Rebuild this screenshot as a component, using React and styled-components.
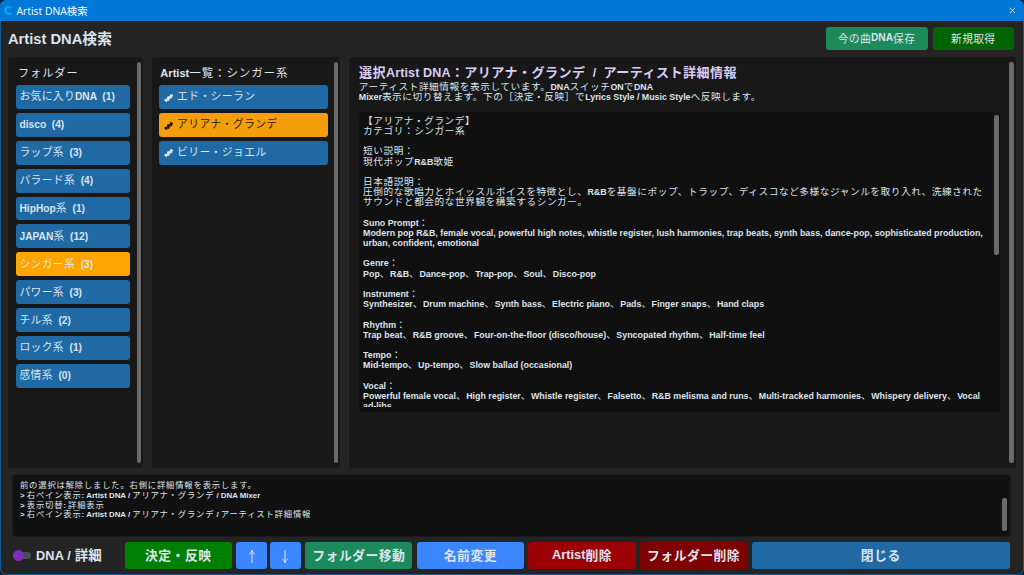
import React from 'react';
import styled, { createGlobalStyle } from 'styled-components';

const GlobalStyle = createGlobalStyle`
    * {
        box-sizing: border-box;
    }

    body {
        margin: 0;
        background: #10202c;
        overflow: hidden;
    }
`;

const Window = styled.div`
    display: flex;
    flex-direction: column;
    width: 1024px;
    height: 575px;
    overflow: hidden;
    border-radius: 6px;
    background: #242424;
    color: #dce4ee;
    font-family: 'Liberation Sans', 'Noto Sans CJK JP', sans-serif;
    font-weight: 700;
    text-spacing-trim: space-all;
    box-shadow: inset 0 0 0 1px #125a8e;
`;

const TitleBar = styled.header`
    display: flex;
    align-items: center;
    flex: none;
    height: 21px;
    padding: 0 8px 0 4px;
    background: #0078d7;
    color: #fff;
    font-family: 'Open Sans', 'Noto Sans CJK JP', sans-serif;
    font-weight: 400;
    font-size: 10.4px;

    svg {
        flex: none;
    }
`;

const WindowTitle = styled.div`
    flex: 1;
    padding: 0 0 0 3.4px;
    line-height: 20px;
`;

const Run = styled.span`
    font-weight: ${p => (p.$bold ? 700 : 400)};
    font-size: ${p => p.$scale}em;
    letter-spacing: ${p => p.$track}px;
`;

const Line = styled.div`
    height: ${p => p.$height}px;
    line-height: ${p => p.$height}px;
    white-space: pre;
`;

const Header = styled.div`
    display: flex;
    align-items: center;
    flex: none;
    gap: 5.5px;
    height: 36px;
    padding: 0 10.5px 1px 8px;
`;

const Heading = styled.h1`
    flex: 1;
    margin: 0;
    font-size: 14.7px;
    line-height: 20px;
`;

const Button = styled.button`
    display: flex;
    align-items: center;
    justify-content: center;
    flex: ${p => (p.$grow ? 1 : 'none')};
    width: ${p => p.$width}px;
    height: ${p => p.$height || 27}px;
    padding: 0 0 2px;
    border: 0;
    border-radius: 3px;
    background: ${p => p.$color};
    color: #dce4ee;
    font: inherit;
    font-size: ${p => p.$size || 12.8}px;
    white-space: pre;
`;

const Panels = styled.main`
    display: grid;
    grid-template-columns: 135px 188.5px 667px;
    gap: 8.5px;
    flex: none;
    height: 410.5px;
    padding-left: 8px;
`;

const Panel = styled.section`
    display: flex;
    justify-content: space-between;
    min-width: 0;
    padding: 4.5px 2px 4.5px ${p => p.$left}px;
    border-radius: 4px;
    background: #181818;
`;

const PanelBody = styled.div`
    width: ${p => p.$width}px;
`;

const PanelTitle = styled.h2`
    height: 23.5px;
    margin: 0;
    padding-left: ${p => p.$left}px;
    font-size: 11.1px;
    line-height: 22px;
    white-space: pre;
`;

const Scrollbar = styled.div`
    flex: none;
    width: 4.5px;
    height: ${p => (p.$height ? `${p.$height}px` : '100%')};
    border-radius: 2px;
    background: #6a6a6a;
`;

const List = styled.ul`
    display: flex;
    flex-direction: column;
    gap: 4px;
    margin: 0;
    padding: 0;
    list-style: none;
`;

const Item = styled.li`
    display: flex;
    align-items: center;
    gap: 3.5px;
    height: 23.9px;
    padding: 0 4px;
    border-radius: 3px;
    background: ${p => p.$color || '#1f6aa5'};
    color: ${p => p.$text || '#dce4ee'};
    font-size: 10.2px;
    line-height: 23px;
    white-space: pre;

    svg {
        margin: 1px 0 0 1px;
    }
`;

const ItemText = styled.span`
    height: 23px;
`;

const DetailTitle = styled.h2`
    height: 20.7px;
    margin: 0;
    padding-left: 0.5px;
    color: #d9cdf5;
    font-size: 12.56px;
    line-height: 21px;
    white-space: pre;
`;

const Description = styled.div`
    height: 29.6px;
    padding-left: 0.3px;
    font-size: 8.86px;
`;

const DetailBox = styled.div`
    display: flex;
    justify-content: space-between;
    height: 300px;
    padding: 3.2px 1px 4px 4.6px;
    border-radius: 4px;
    background: #101010;
    font-size: 8.86px;
`;

const Clip = styled.div`
    height: 292px;
    padding-top: 0.8px;
    overflow: hidden;
`;

const Log = styled.section`
    display: flex;
    align-items: flex-end;
    justify-content: space-between;
    flex: none;
    width: 999px;
    height: 63px;
    margin: 6.5px 0 0 12.4px;
    padding: 0 3.5px 5.5px 6.6px;
    border: 1px solid #1b1b1b;
    border-radius: 4px;
    background: #111;
    font-size: 7.85px;
`;

const LogLines = styled.div`
    align-self: flex-start;
    padding-top: 6px;
`;

const Footer = styled.footer`
    display: flex;
    align-items: center;
    gap: 4.3px;
    flex: none;
    height: 27px;
    margin-top: 5px;
    padding: 0 14px 0 13px;
`;

const Toggle = styled.label`
    display: flex;
    align-items: center;
    gap: 5px;
    width: 107.3px;
    font-size: 12.7px;
    line-height: 27px;
    white-space: pre;
`;

const ToggleText = styled.span`
    height: 27px;
`;

const Track = styled.span`
    display: flex;
    align-items: center;
    width: 18px;
    height: 7px;
    border-radius: 4px;
    background: #4a4d50;
`;

const Knob = styled.span`
    flex: none;
    width: 10.5px;
    height: 10.5px;
    border-radius: 50%;
    background: #7b2cbf;
`;

const ArrowPair = styled.div`
    display: flex;
    gap: 2.7px;
`;

const CJK = /([\u3000-\u9fff\uff00-\uffef]+)/;

// Latin runs are bold; the Japanese ones are larger and spaced to a wider grid
const Mixed = ({ children, track = 0.3, scale = 1.06, bold = false, latin = 0 }) =>
    children.split(CJK).map((part, i) => (
        <Run
            key={i}
            $bold={i % 2 === 0 || bold}
            $scale={i % 2 ? scale : 1}
            $track={i % 2 ? track : latin}
        >
            {part}
        </Run>
    ));

const folders = [
    'お気に入りDNA  (1)',
    'disco  (4)',
    'ラップ系  (3)',
    'バラード系  (4)',
    'HipHop系  (1)',
    'JAPAN系  (12)',
    'シンガー系  (3)',
    'パワー系  (3)',
    'チル系  (2)',
    'ロック系  (1)',
    '感情系  (0)',
];

const artists = ['エド・シーラン', 'アリアナ・グランデ', 'ビリー・ジョエル'];

const description = [
    'アーティスト詳細情報を表示しています。DNAスイッチONでDNA',
    'Mixer表示に切り替えます。下の［決定・反映］でLyrics Style / Music Styleへ反映します。',
];

const details = `【アリアナ・グランデ】
カテゴリ：シンガー系

短い説明：
現代ポップR&B歌姫

日本語説明：
圧倒的な歌唱力とホイッスルボイスを特徴とし、R&Bを基盤にポップ、トラップ、ディスコなど多様なジャンルを取り入れ、洗練された
サウンドと都会的な世界観を構築するシンガー。

Suno Prompt：
Modern pop R&B, female vocal, powerful high notes, whistle register, lush harmonies, trap beats, synth bass, dance-pop, sophisticated production,
urban, confident, emotional

Genre：
Pop、R&B、Dance-pop、Trap-pop、Soul、Disco-pop

Instrument：
Synthesizer、Drum machine、Synth bass、Electric piano、Pads、Finger snaps、Hand claps

Rhythm：
Trap beat、R&B groove、Four-on-the-floor (disco/house)、Syncopated rhythm、Half-time feel

Tempo：
Mid-tempo、Up-tempo、Slow ballad (occasional)

Vocal：
Powerful female vocal、High register、Whistle register、Falsetto、R&B melisma and runs、Multi-tracked harmonies、Whispery delivery、Vocal
ad-libs`.split('\n');

const logs = [
    '前の選択は解除しました。右側に詳細情報を表示します。',
    '> 右ペイン表示: Artist DNA / アリアナ・グランデ / DNA Mixer',
    '> 表示切替: 詳細表示',
    '> 右ペイン表示: Artist DNA / アリアナ・グランデ / アーティスト詳細情報',
];

const AppIcon = () => (
    <svg width="9" height="9" viewBox="0 0 9 9" fill="none">
        <path d="M7.6 1.3H3L1.6 2.6v3.8L3 7.7h4.6" stroke="#12a0fb" strokeWidth="2" />
    </svg>
);

const CloseIcon = () => (
    <svg width="7" height="7" viewBox="0 0 7 7" fill="none">
        <path d="M.8.8l5.2 5.2M6 .8L.8 6" stroke="#d8ecff" strokeWidth=".9" />
    </svg>
);

const DnaIcon = () => (
    <svg width="9.5" height="9.5" viewBox="0 0 10 10" fill="currentColor">
        <path d="M.5 6.6l1.3-.9.6.5 1-.9-.4-1 1.4-1.2 1 .5.9-.8-.3-.8L7.3.7l.6.9 1.4.2.4 1-1.2 1.1.2.9-1.3 1.1-1-.2-.6.6.2 1-1.3 1.2-1-.4-.5.6-.1.9-1 .2-.5-1-1.1-.4z" />
    </svg>
);

const Arrow = ({ down }) => (
    <svg width="10" height="18" viewBox="0 0 10 18" fill="none" stroke="#dce9fb">
        <path d={down ? 'M5 4v12.5M2.2 12.8Q4.4 14 5 16.7 5.6 14 7.8 12.8' : 'M5 17V4.5M2.2 8.2Q4.4 7 5 4.3 5.6 7 7.8 8.2'} />
    </svg>
);

export default function App() {
    return (
        <Window>
            <GlobalStyle />
            <TitleBar>
                <AppIcon />
                <WindowTitle>Artist DNA検索</WindowTitle>
                <CloseIcon />
            </TitleBar>

            <Header>
                <Heading>
                    <Mixed track={0.3} scale={1} bold>Artist DNA検索</Mixed>
                </Heading>
                <Button $color="#1d8a5b" $width={102} $height={23} $size={10.2}>
                    <Mixed>今の曲DNA保存</Mixed>
                </Button>
                <Button $color="#006400" $width={80.5} $height={23} $size={10.2}>
                    <Mixed>新規取得</Mixed>
                </Button>
            </Header>

            <Panels>
                <Panel $left={7.5}>
                    <PanelBody $width={114.5}>
                        <PanelTitle $left={2.5}>
                            <Mixed scale={1} track={1}>フォルダー</Mixed>
                        </PanelTitle>
                        <List>
                            {folders.map((name, i) => (
                                <Item key={name} $color={i === 6 ? '#ffa500' : null}>
                                    <ItemText>
                                        <Mixed>{name}</Mixed>
                                    </ItemText>
                                </Item>
                            ))}
                        </List>
                    </PanelBody>
                    <Scrollbar />
                </Panel>

                <Panel $left={7.5}>
                    <PanelBody $width={169}>
                        <PanelTitle $left={1.3}>
                            <Mixed scale={1.04} track={0.85}>Artist一覧：シンガー系</Mixed>
                        </PanelTitle>
                        <List>
                            {artists.map((name, i) => (
                                <Item
                                    key={name}
                                    $color={i === 1 ? '#f59e0b' : null}
                                    $text={i === 1 ? '#2b1c02' : null}
                                >
                                    <DnaIcon />
                                    <ItemText>
                                        <Mixed track={0.4}>{name}</Mixed>
                                    </ItemText>
                                </Item>
                            ))}
                        </List>
                    </PanelBody>
                    <Scrollbar />
                </Panel>

                <Panel $left={10}>
                    <PanelBody $width={641}>
                        <DetailTitle>
                            <Mixed scale={1.04} track={0.46} latin={0.12} bold>
                                {'選択Artist DNA：アリアナ・グランデ  /  アーティスト詳細情報'}
                            </Mixed>
                        </DetailTitle>
                        <Description>
                            {description.map(text => (
                                <Line key={text} $height={10.2}>
                                    <Mixed scale={1.09} track={0.57}>{text}</Mixed>
                                </Line>
                            ))}
                        </Description>
                        <DetailBox>
                            <Clip>
                                {details.map((text, i) => (
                                    <Line key={i} $height={10.19}>
                                        <Mixed scale={1.09} track={0.57}>{text}</Mixed>
                                    </Line>
                                ))}
                            </Clip>
                            <Scrollbar $height={140} />
                        </DetailBox>
                    </PanelBody>
                    <Scrollbar />
                </Panel>
            </Panels>

            <Log>
                <LogLines>
                    {logs.map(text => (
                        <Line key={text} $height={9.75}>
                            <Mixed scale={1.06} track={0.82}>{text}</Mixed>
                        </Line>
                    ))}
                </LogLines>
                <Scrollbar $height={32.5} />
            </Log>

            <Footer>
                <Toggle>
                    <Track>
                        <Knob />
                    </Track>
                    <ToggleText>
                        <Mixed track={0} latin={0.2} bold>DNA / 詳細</Mixed>
                    </ToggleText>
                </Toggle>
                <Button $color="#008000" $width={107.3}>
                    <Mixed scale={1} track={0.5} bold>決定・反映</Mixed>
                </Button>
                <ArrowPair>
                    <Button $color="#3a86ff" $width={31}>
                        <Arrow />
                    </Button>
                    <Button $color="#3a86ff" $width={31}>
                        <Arrow down />
                    </Button>
                </ArrowPair>
                <Button $color="#1d8a5b" $width={107.3}>
                    <Mixed scale={1} track={0.5} bold>フォルダー移動</Mixed>
                </Button>
                <Button $color="#3a86ff" $width={107.3}>
                    <Mixed scale={1} track={0.5} bold>名前変更</Mixed>
                </Button>
                <Button $color="#9b0007" $width={107.3}>
                    <Mixed scale={1} track={0.5} bold>Artist削除</Mixed>
                </Button>
                <Button $color="#7f0000" $width={107.3}>
                    <Mixed scale={1} track={0.5} bold>フォルダー削除</Mixed>
                </Button>
                <Button $color="#1f6aa5" $grow>
                    <Mixed scale={1} track={0.5} bold>閉じる</Mixed>
                </Button>
            </Footer>
        </Window>
    );
}
